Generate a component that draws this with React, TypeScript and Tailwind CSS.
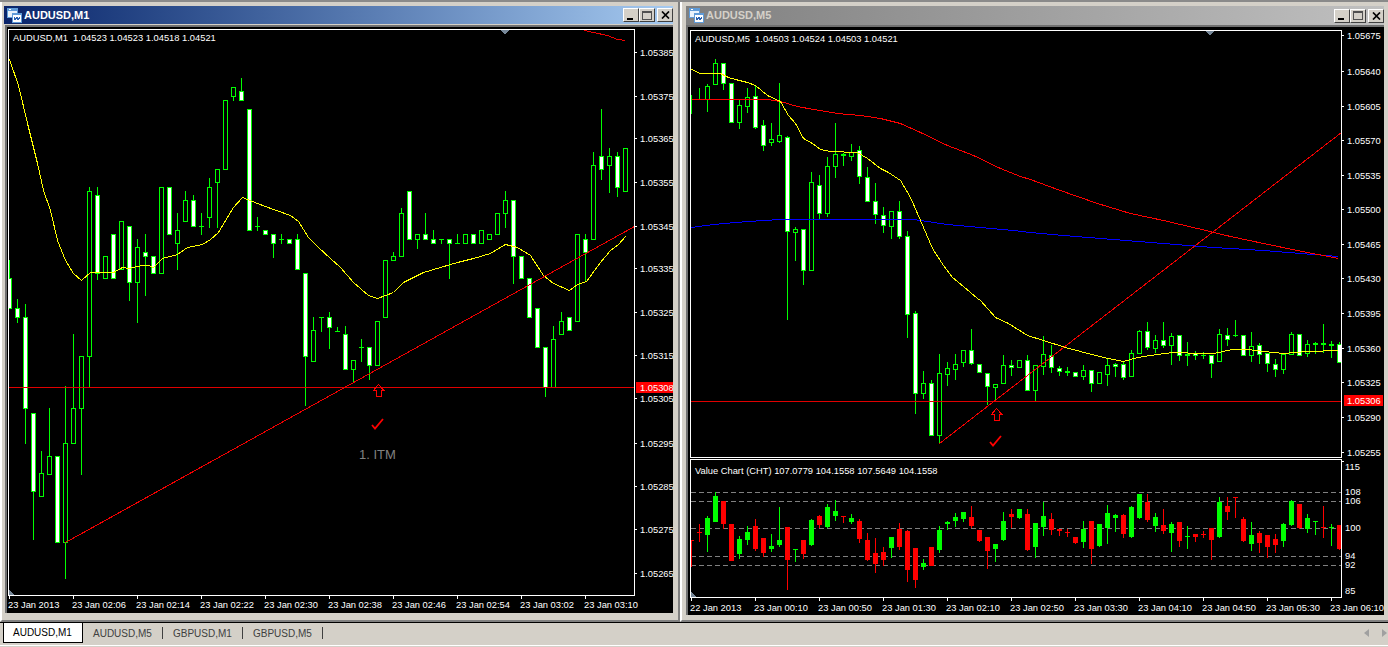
import type { ReactNode } from "react";

type Bar = [string, number, number, number?, number?];

const GREEN = "#00ff00";
const RED = "#ff0000";

// candles in screen px: kind, body top, body bottom, high, low
const m1Bars: Bar[] = [
  ["w", 278, 308, 260], ["w", 308, 317, 299, 322], ["w", 317, 408, 304, 443], ["w", 413, 491, 413, 539],
  ["b", 473, 496, 451], ["b", 456, 474, 408], ["w", 456, 542], ["b", 443, 542, 386, 578],
  ["b", 408, 443, 334], ["b", 356, 408, 356, 474], ["b", 191, 356, 187, 387], ["w", 195, 273, 187, 279],
  ["b", 256, 278], ["w", 234, 278], ["b", 221, 269], ["w", 226, 282, 226, 300],
  ["b", 247, 282, 239, 322], ["w", 252, 256, 234, 295], ["w", 256, 273], ["b", 187, 273],
  ["w", 187, 234], ["b", 230, 243, 213, 269], ["b", 200, 221, 191], ["w", 200, 226, 195],
  ["b", 226, 226, 213, 234], ["b", 187, 217, 178, 227], ["b", 169, 182, 169, 227], ["b", 100, 169],
  ["b", 87, 96, 87, 100], ["w", 91, 100, 78], ["w", 109, 230], ["b", 226, 226, 217, 230],
  ["w", 230, 234], ["w", 234, 243, 234, 257], ["b", 239, 239, 234, 243], ["w", 239, 243],
  ["w", 239, 269, 234], ["w", 273, 356, 273, 405], ["b", 330, 361, 317], ["b", 317, 317, 317, 331],
  ["w", 317, 327, 312, 348], ["b", 331, 331, 327, 331], ["w", 334, 369, 326], ["b", 360, 369, 360, 382],
  ["b", 347, 347, 339, 361], ["w", 347, 365, 347, 379], ["b", 321, 365], ["b", 260, 317],
  ["b", 256, 260, 252], ["b", 213, 256, 208], ["w", 191, 239], ["b", 234, 239, 234, 248],
  ["w", 234, 239, 213], ["w", 239, 243, 230], ["b", 239, 239, 239, 243], ["w", 239, 243, 239, 278],
  ["b", 243, 243, 234], ["b", 234, 243], ["w", 234, 243], ["b", 230, 243],
  ["b", 234, 239], ["b", 213, 234], ["b", 200, 213, 191, 227], ["w", 200, 256, 200, 283],
  ["w", 256, 278], ["w", 278, 317], ["w", 308, 347], ["w", 347, 387, 347, 396],
  ["b", 339, 387, 326], ["b", 321, 334, 312], ["w", 317, 330], ["b", 234, 321],
  ["w", 239, 252, 234, 280], ["b", 165, 239, 152], ["w", 156, 169, 109, 179], ["b", 156, 165, 148, 192],
  ["w", 156, 187, 152, 196], ["b", 148, 191],
];

const m5Bars: Bar[] = [
  ["b", 99, 99, 95, 113], ["b", 99, 99, 88], ["b", 86, 99, 84, 111], ["b", 63, 84, 59],
  ["w", 63, 83, 63, 89], ["w", 83, 122], ["b", 105, 122, 100, 128], ["b", 97, 106, 88, 112],
  ["w", 96, 127, 85, 128], ["w", 125, 145, 120, 150], ["b", 139, 142, 123, 145], ["b", 135, 141, 83, 142],
  ["w", 137, 231, 136, 319], ["b", 229, 232, 227, 260], ["w", 229, 270, 229, 284], ["b", 182, 270, 172],
  ["w", 185, 213, 175, 219], ["b", 166, 213, 157, 216], ["b", 154, 166, 123, 177], ["w", 154, 155, 153, 165],
  ["b", 152, 156, 144, 160], ["w", 150, 176, 146, 183], ["w", 177, 201, 167], ["w", 201, 214, 183, 223],
  ["w", 215, 225, 207, 232], ["b", 211, 226, 211, 238], ["w", 211, 236, 201, 238], ["w", 236, 314, 231, 337],
  ["w", 313, 393, 311, 413], ["b", 383, 393, 371, 398], ["w", 383, 435, 380], ["b", 373, 435, 354, 443],
  ["b", 368, 374, 362, 385], ["b", 364, 369, 354, 379], ["b", 350, 362, 350, 366], ["w", 350, 363, 329, 364],
  ["w", 364, 372], ["w", 373, 386, 373, 404], ["b", 384, 387, 384, 399], ["b", 365, 383, 355],
  ["w", 365, 367, 360, 375], ["b", 360, 367], ["w", 360, 390, 355], ["b", 365, 390, 365, 401],
  ["b", 354, 366, 336, 374], ["w", 355, 367, 345, 372], ["w", 368, 371, 366, 375], ["w", 371, 372, 367, 375],
  ["w", 372, 376], ["b", 370, 376, 365, 379], ["w", 370, 383, 370, 391], ["b", 372, 383],
  ["b", 365, 374, 359, 385], ["w", 364, 366, 363, 376], ["w", 364, 377, 362, 379], ["b", 353, 376, 350],
  ["b", 331, 353, 330], ["w", 331, 347, 322, 349], ["b", 340, 348, 335, 352], ["w", 340, 345, 322, 347],
  ["b", 336, 345, 333, 364], ["w", 335, 355, 335, 360], ["w", 354, 355, 342, 365], ["w", 353, 355, 351, 359],
  ["b", 355, 355, 352, 358], ["w", 355, 363, 355, 377], ["b", 334, 361, 329], ["w", 335, 339, 328, 345],
  ["b", 335, 335, 320, 336], ["w", 335, 355], ["b", 346, 355, 332, 361], ["w", 345, 354, 343, 363],
  ["w", 353, 363, 353, 371], ["w", 364, 369, 359, 376], ["b", 354, 369, 354, 373], ["b", 334, 354, 332],
  ["w", 334, 355], ["b", 344, 353, 340, 356], ["w", 343, 344, 342, 353], ["w", 343, 344, 324, 352],
  ["w", 344, 345, 341, 357], ["w", 344, 362, 342],
];

const valueBars: Bar[] = [
  ["r", 540, 540, 540, 566], ["r", 532, 532, 524, 541], ["g", 518, 534, 516, 551], ["g", 496, 521, 492],
  ["r", 501, 523, 501, 528], ["r", 524, 560], ["g", 539, 553, 536, 558], ["g", 532, 539, 526, 544],
  ["r", 526, 548, 519, 550], ["r", 538, 552, 538, 556], ["g", 546, 548, 534, 551], ["g", 540, 544, 507, 546],
  ["r", 527, 559, 527, 589], ["g", 549, 549, 549, 561], ["r", 540, 553, 540, 558], ["g", 520, 544, 519, 545],
  ["r", 516, 524, 515, 527], ["g", 507, 526, 504, 527], ["g", 511, 515, 500, 520], ["r", 516, 516, 516, 522],
  ["g", 518, 521, 514, 523], ["r", 521, 538, 519, 542], ["r", 540, 559, 533, 560], ["r", 553, 563, 538, 572],
  ["r", 552, 559, 547, 565], ["g", 537, 547, 537, 557], ["r", 529, 546, 523, 549], ["r", 531, 569, 530, 581],
  ["r", 548, 579, 548, 587], ["g", 563, 566, 559, 569], ["r", 547, 565], ["g", 530, 549, 526, 552],
  ["g", 522, 523, 521, 529], ["g", 517, 520, 513, 526], ["g", 512, 518, 512, 521], ["r", 517, 525, 506, 527],
  ["r", 530, 540, 530, 541], ["r", 537, 550, 537, 568], ["g", 544, 548, 544, 561], ["g", 521, 539, 512, 540],
  ["r", 514, 516, 509, 527], ["g", 509, 517, 509, 518], ["r", 514, 549, 509, 550], ["g", 523, 546, 523, 557],
  ["g", 516, 526, 502, 535], ["r", 519, 529, 513, 534], ["r", 529, 530, 529, 535], ["r", 532, 532, 529, 536],
  ["r", 537, 542, 537, 543], ["g", 529, 541, 521, 547], ["r", 521, 548, 521, 563], ["g", 524, 545, 524, 546],
  ["g", 513, 527, 505, 543], ["g", 515, 517, 514, 531], ["r", 515, 533, 514, 537], ["g", 507, 536, 506, 537],
  ["g", 494, 517, 494, 518], ["r", 502, 519, 494, 521], ["g", 517, 525, 513, 531], ["r", 525, 530, 509, 533],
  ["g", 524, 532, 522, 551], ["r", 522, 540, 522, 546], ["g", 536, 536, 526, 548], ["r", 534, 536, 534, 541],
  ["r", 534, 534, 531, 537], ["r", 528, 539, 528, 559], ["g", 502, 536, 497, 537], ["r", 506, 511, 497, 519],
  ["r", 497, 497, 497, 517], ["r", 519, 540, 517, 541], ["g", 535, 543, 522, 550], ["r", 533, 542, 531, 552],
  ["r", 535, 546, 535, 557], ["r", 539, 544, 534, 552], ["g", 524, 540, 523, 546], ["g", 501, 524, 500, 525],
  ["r", 504, 527, 504, 528], ["g", 518, 528, 514, 532], ["g", 521, 521, 521, 534], ["r", 527, 527, 506, 537],
  ["g", 527, 527, 524, 545], ["r", 525, 548, 525, 549],
];

const m1Yellow =
  "9,59 18,85 28,127 37,163 43,190 50,210 57,240 65,260 73,273 81,280 90,272 113,272 122,267 128,268 142,265 148,265 153,267 162,258 177,254 187,247 202,244 210,239 218,232 233,207 242,197 257,203 273,209 290,215 298,221 308,237 318,247 330,258 340,267 353,282 368,295 377,298 393,292 403,282 423,272 440,267 457,262 473,258 490,253 505,244 517,247 530,255 543,275 553,283 569,290 577,284 586,281 600,262 610,250 618,244 625,236";
const m5Yellow =
  "691,69 700,73 710,73 720,73 728,77 735,79 747,82 755,85 767,95 780,101 788,115 795,123 803,138 812,143 820,149 830,151 857,152 867,158 880,168 888,172 900,180 910,197 920,220 932,248 943,265 952,277 963,286 977,298 980,300 995,317 1008,323 1027,335 1043,340 1065,347 1080,351 1103,357 1123,361 1137,357 1157,354 1172,352 1203,353 1213,353 1232,349 1247,349 1263,351 1283,353 1307,351 1338,350";
const m5RedMa =
  "691,99 730,99 767,99 780,101 797,106 813,109 837,113 860,115 880,118 900,123 920,132 947,145 973,155 1000,168 1020,176 1030,179 1057,189 1097,203 1130,213 1163,220 1197,228 1230,236 1263,243 1297,250 1338,258";
const m5Blue =
  "691,227 713,224 747,221 780,219 847,219 913,219 947,224 980,227 1013,230 1030,232 1063,235 1113,239 1163,243 1213,247 1263,250 1338,256";

const m1Prices: [string, number][] = [
  ["1.05385", 52], ["1.05375", 96], ["1.05365", 138], ["1.05355", 182], ["1.05345", 226], ["1.05335", 268],
  ["1.05325", 312], ["1.05315", 355], ["1.05305", 398], ["1.05295", 443], ["1.05285", 486], ["1.05275", 529],
  ["1.05265", 573],
];
const m5Prices: [string, number][] = [
  ["1.05675", 35], ["1.05640", 71], ["1.05605", 106], ["1.05570", 140], ["1.05535", 175], ["1.05500", 209],
  ["1.05465", 244], ["1.05430", 278], ["1.05395", 313], ["1.05360", 348], ["1.05325", 382], ["1.05290", 417],
  ["1.05255", 452],
];
const valueLevels: [string, number][] = [
  ["115", 466], ["108", 491], ["106", 500], ["100", 527], ["94", 555], ["92", 564], ["85", 590],
];
const m1Times = ["23 Jan 2013", "23 Jan 02:06", "23 Jan 02:14", "23 Jan 02:22", "23 Jan 02:30", "23 Jan 02:38", "23 Jan 02:46", "23 Jan 02:54", "23 Jan 03:02", "23 Jan 03:10"];
const m5Times = ["22 Jan 2013", "23 Jan 00:10", "23 Jan 00:50", "23 Jan 01:30", "23 Jan 02:10", "23 Jan 02:50", "23 Jan 03:30", "23 Jan 04:10", "23 Jan 04:50", "23 Jan 05:30", "23 Jan 06:10"];

function Candles({ bars, x0 }: { bars: Bar[]; x0: number }) {
  return (
    <>
      {bars.map((b, i) => {
        const [kind, top, bot, hi = top, low = bot] = b;
        const x = x0 + i * 8;
        const line = kind === "r" ? RED : GREEN;
        const inner = kind === "w" ? "#ffffff" : kind === "b" ? "#000000" : line;
        return (
          <g key={i}>
            <rect x={x} y={hi} width={1} height={low - hi + 1} fill={line} />
            <rect x={x - 2} y={top} width={5} height={bot - top + 1} fill={line} />
            {bot - top > 1 && <rect x={x - 1} y={top + 1} width={3} height={bot - top - 1} fill={inner} />}
          </g>
        );
      })}
    </>
  );
}

function Line({ points, color }: { points: string; color: string }) {
  return <polyline points={points} fill="none" stroke={color} strokeWidth={1} transform="translate(0.5 0.5)" />;
}

function ArrowMark({ x, y }: { x: number; y: number }) {
  return (
    <path
      d={`M${x + 5.5} ${y + 0.5} L${x + 11} ${y + 6.5} H${x + 8.5} V${y + 12.5} H${x + 3.5} V${y + 6.5} H${x + 0.5} Z`}
      fill="none"
      stroke={RED}
    />
  );
}

function Check({ x, y }: { x: number; y: number }) {
  return (
    <path
      d={`M${x} ${y + 6} L${x + 3} ${y + 9.5} L${x + 11} ${y}`}
      fill="none"
      stroke={RED}
      strokeWidth={1.8}
      shapeRendering="auto"
    />
  );
}

function WinIcon() {
  return (
    <svg width="15" height="15" viewBox="0 0 15 15" className="shrink-0" shapeRendering="crispEdges">
      <rect x="0" y="0" width="11" height="10" fill="#5f9bd8" />
      <rect x="1" y="3" width="9" height="6" fill="#e8f2fb" />
      <rect x="5" y="5" width="10" height="10" fill="#5f9bd8" />
      <rect x="6" y="7" width="8" height="7" fill="#ffffff" />
      <path d="M7 9 L8 12 L10 9 L11 12 L13 9" fill="none" stroke="#2a62b0" strokeWidth="1" />
      <rect x="2" y="1" width="2" height="1" fill="#ffffff" />
    </svg>
  );
}

function WinButton({ children, className = "" }: { children: ReactNode; className?: string }) {
  return (
    <div className={`flex h-[14px] w-[16px] items-center justify-center border border-t-white border-l-white border-r-[#404040] border-b-[#404040] bg-[#d4d0c8] ${className}`}>
      {children}
    </div>
  );
}

function ChildWindow({
  title,
  active,
  className,
  bodyClass,
  viewBox,
  width,
  height,
  children,
}: {
  title: string;
  active: boolean;
  className: string;
  bodyClass: string;
  viewBox: string;
  width: number;
  height: number;
  children: ReactNode;
}) {
  return (
    <div className={`flex flex-col border-b-2 border-b-[#808080] bg-[#d4d0c8] ${className}`}>
      <div
        className={`flex items-center pl-[3px] pr-0 ${active ? "h-[18px] bg-linear-to-r from-[#0a246a] to-[#a6caf0] text-white" : "h-[19px] bg-linear-to-r from-[#808080] to-[#c0c0c0] text-[#d4d0c8]"}`}
      >
        <WinIcon />
        <span className="ml-[2px] text-[11px] font-bold">{title}</span>
        <div className="ml-auto flex items-center">
          <WinButton>
            <div className="mt-[7px] mr-[2px] h-[2px] w-[6px] bg-black" />
          </WinButton>
          <WinButton className="bg-[#c4c0b8]">
            <div className="h-[9px] w-[10px] border border-t-2 border-[#505050]" />
          </WinButton>
          <WinButton className="ml-[2px]">
            <svg width="9" height="8" viewBox="0 0 9 8">
              <path d="M1 0.5 L8 7.5 M8 0.5 L1 7.5" stroke="#000" strokeWidth="1.7" />
            </svg>
          </WinButton>
        </div>
      </div>
      <div className={`border-t-2 border-l-2 border-[#707070] ${bodyClass}`}>
        <svg
          width={width}
          height={height}
          viewBox={viewBox}
          shapeRendering="crispEdges"
          className="block bg-black fill-white text-[9.33px]"
        >
          {children}
        </svg>
      </div>
    </div>
  );
}

function M1Chart() {
  return (
    <>
      <defs>
        <clipPath id="m1plot">
          <rect x="9" y="30" width="625" height="565" />
        </clipPath>
      </defs>
      <g clipPath="url(#m1plot)">
        <Candles bars={m1Bars} x0={9} />
        <rect x="9" y="387" width="625" height="1" fill="#e00000" />
        <Line points={m1Yellow} color="#ffff00" />
        <Line points="65,542 634,226" color="#f00000" />
        <Line points="584,30 593,32 607,35 617,39 625,40" color="#f00000" />
      </g>
      <rect x="8.5" y="29.5" width="626" height="566" fill="none" stroke="#fff" />
      <path d="M500 30 H509 L504.5 34.5 Z" fill="#778899" />
      <path d="M9 589 L14 595 H9 Z" fill="#778899" />
      <ArrowMark x={373} y={384} />
      <Check x={372} y={419} />
      <text x="359" y="459" className="fill-[#808080] text-[13px]">1. ITM</text>
      <text x="13" y="41" className="whitespace-pre">AUDUSD,M1  1.04523 1.04523 1.04518 1.04521</text>
      {m1Prices.map(([p, y]) => (
        <g key={p}>
          <rect x="635" y={y} width="2" height="1" fill="#fff" />
          <text x="640" y={y + 4}>{p}</text>
        </g>
      ))}
      <rect x="636" y="382" width="37" height="11" fill="#ff0000" />
      <text x="640" y="391" className="fill-[#ffffff]">1.05308</text>
      {m1Times.map((t, i) => (
        <g key={t}>
          <rect x={9 + i * 64} y="596" width="1" height="3" fill="#fff" />
          <text x={8 + i * 64} y="608">{t}</text>
        </g>
      ))}
    </>
  );
}

function M5Chart() {
  return (
    <>
      <defs>
        <clipPath id="m5plot">
          <rect x="691" y="31" width="650" height="426" />
        </clipPath>
        <clipPath id="valueplot">
          <rect x="691" y="460" width="650" height="137" />
        </clipPath>
      </defs>
      <g clipPath="url(#m5plot)">
        <Candles bars={m5Bars} x0={691} />
        <rect x="691" y="401" width="650" height="1" fill="#e00000" />
        <Line points={m5Blue} color="#0000ff" />
        <Line points={m5RedMa} color="#ff0000" />
        <Line points={m5Yellow} color="#ffff00" />
        <Line points="939,443 1341,132" color="#f00000" />
      </g>
      <rect x="690.5" y="30.5" width="651" height="427" fill="none" stroke="#fff" />
      <path d="M1205 31 H1214 L1209.5 35.5 Z" fill="#778899" />
      <ArrowMark x={991} y={408} />
      <Check x={990} y={436} />
      <text x="695" y="42" className="whitespace-pre">AUDUSD,M5  1.04503 1.04524 1.04503 1.04521</text>
      {m5Prices.map(([p, y]) => (
        <g key={p}>
          <rect x="1342" y={y} width="2" height="1" fill="#fff" />
          <text x="1347" y={y + 4}>{p}</text>
        </g>
      ))}
      <rect x="1344" y="395" width="39" height="11" fill="#ff0000" />
      <text x="1347" y="404">1.05306</text>

      <g clipPath="url(#valueplot)">
        {[492, 501, 528, 556, 565].map((y) => (
          <line key={y} x1="691" x2="1341" y1={y + 0.5} y2={y + 0.5} stroke="#808080" strokeDasharray="5 3" />
        ))}
        <Candles bars={valueBars} x0={691} />
      </g>
      <rect x="690.5" y="459.5" width="651" height="138" fill="none" stroke="#fff" />
      <path d="M691 591 L696 597 H691 Z" fill="#778899" />
      <text x="695" y="474">Value Chart (CHT) 107.0779 104.1558 107.5649 104.1558</text>
      <rect x="1342" y="461" width="2" height="1" fill="#fff" />
      {valueLevels.map(([p, y]) => (
        <text key={p} x="1345" y={y + 4}>{p}</text>
      ))}
      {m5Times.map((t, i) => (
        <g key={t}>
          <rect x={691 + i * 64} y="598" width="1" height="3" fill="#fff" />
          <text x={690 + i * 64} y="611">{t}</text>
        </g>
      ))}
    </>
  );
}

export default function App() {
  return (
    <div className="flex h-[647px] w-[1388px] flex-col overflow-hidden bg-[#d4d0c8] font-['Liberation_Sans',sans-serif]">
      {/* MDI area */}
      <div className="flex h-[623px] border-t-2 border-b border-t-[#8a8a8a] border-b-black">
        <ChildWindow
          title="AUDUSD,M1"
          active
          className="w-[678px] border-l-2 border-l-white pt-[4px] pr-[5px] pl-[2px]"
          bodyClass="mt-px ml-px"
          viewBox="7 27 666 586"
          width={666}
          height={586}
        >
          <M1Chart />
        </ChildWindow>
        <div className="w-[2px] bg-[#808080]" />
        <ChildWindow
          title="AUDUSD,M5"
          active={false}
          className="flex-1 border-l-2 border-l-white pt-[4px] pr-[4px] pl-[4px]"
          bodyClass=""
          viewBox="688 27 696 588"
          width={696}
          height={588}
        >
          <M5Chart />
        </ChildWindow>
      </div>

      {/* tab bar */}
      <div className="flex flex-1 flex-col">
        <div className="flex h-[20px] pl-[3px] text-[10px] text-[#404040]">
          <div className="flex w-[80px] items-center border-x border-b border-black bg-white pl-[9px] text-black">AUDUSD,M1</div>
          {["AUDUSD,M5", "GBPUSD,M1", "GBPUSD,M5"].map((t) => (
            <div key={t} className="flex w-[80px] items-center justify-between pl-[10px]">
              {t}
              <span className="h-[12px] w-px bg-[#404040]" />
            </div>
          ))}
          <div className="ml-auto flex items-center gap-[13px] pr-[1px]">
            <svg width="5" height="8" viewBox="0 0 5 8"><path d="M5 0 V8 L0 4 Z" fill="#a0a0a0" /></svg>
            <svg width="5" height="8" viewBox="0 0 5 8"><path d="M0 0 V8 L5 4 Z" fill="#a0a0a0" /></svg>
          </div>
        </div>
        <div className="mt-[2px] h-px bg-white" />
      </div>
    </div>
  );
}
